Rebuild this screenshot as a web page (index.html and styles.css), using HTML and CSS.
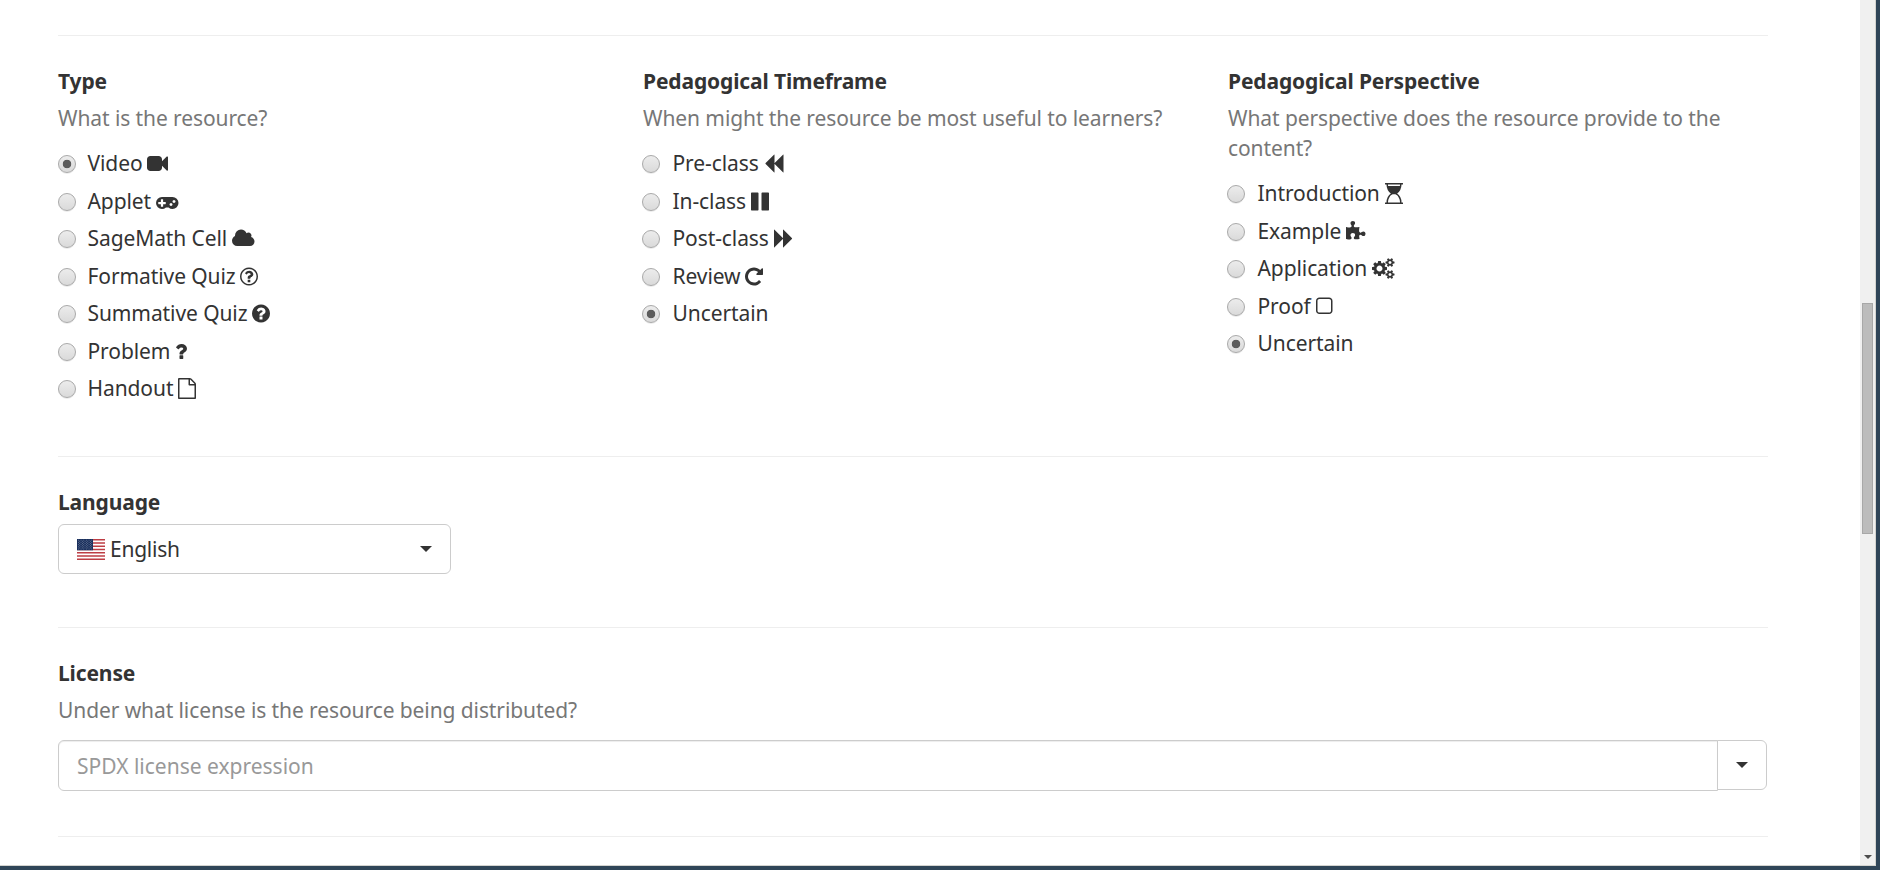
FILE: index.html
```html
<!DOCTYPE html>
<html lang="en">
<head>
<meta charset="utf-8">
<title>Resource</title>
<link rel="stylesheet" href="styles.css">
</head>
<body>
<div class="window">
<main class="page">
  <section class="section columns">
    <div class="col">
      <h2 class="label">Type</h2>
      <p class="help">What is the resource?</p>
      <label class="option"><span class="radio checked"></span>Video <svg class="icon w1792" viewBox="0 -1536 1792 1792"><path transform="scale(1,-1)" d="M1792 1184v-1088q0 -42 -39 -59q-13 -5 -25 -5q-27 0 -45 19l-403 403v-166q0 -119 -84.5 -203.5t-203.5 -84.5h-704q-119 0 -203.5 84.5t-84.5 203.5v704q0 119 84.5 203.5t203.5 84.5h704q119 0 203.5 -84.5t84.5 -203.5v-165l403 402q18 19 45 19q12 0 25 -5q39 -17 39 -59z"/></svg></label>
      <label class="option"><span class="radio"></span>Applet <svg class="icon w1920" viewBox="0 -1536 1920 1792"><path transform="scale(1,-1)" d="M832 448v128q0 14 -9 23t-23 9h-192v192q0 14 -9 23t-23 9h-128q-14 0 -23 -9t-9 -23v-192h-192q-14 0 -23 -9t-9 -23v-128q0 -14 9 -23t23 -9h192v-192q0 -14 9 -23t23 -9h128q14 0 23 9t9 23v192h192q14 0 23 9t9 23zM1408 384q0 53 -37.5 90.5t-90.5 37.5t-90.5 -37.5t-37.5 -90.5t37.5 -90.5t90.5 -37.5t90.5 37.5t37.5 90.5zM1664 640q0 53 -37.5 90.5t-90.5 37.5t-90.5 -37.5t-37.5 -90.5t37.5 -90.5t90.5 -37.5t90.5 37.5t37.5 90.5zM1920 512q0 -212 -150 -362t-362 -150q-192 0 -338 128h-220q-146 -128 -338 -128q-212 0 -362 150t-150 362t150 362t362 150h896q212 0 362 -150t150 -362z"/></svg></label>
      <label class="option"><span class="radio"></span>SageMath Cell <svg class="icon w1920" viewBox="0 -1536 1920 1792"><path transform="scale(1,-1)" d="M1920 384q0 -159 -112.5 -271.5t-271.5 -112.5h-1088q-185 0 -316.5 131.5t-131.5 316.5q0 132 71 241.5t187 163.5q-2 28 -2 43q0 212 150 362t362 150q158 0 286.5 -88t187.5 -230q70 62 166 62q106 0 181 -75t75 -181q0 -75 -41 -138q129 -30 213 -134.5t84 -239.5z"/></svg></label>
      <label class="option"><span class="radio"></span>Formative Quiz <svg class="icon w1536" viewBox="0 -1536 1536 1792"><path transform="scale(1,-1)" d="M880 336v-160q0 -14 -9 -23t-23 -9h-160q-14 0 -23 9t-9 23v160q0 14 9 23t23 9h160q14 0 23 -9t9 -23zM1136 832q0 -50 -15 -90t-45.5 -69t-52 -44t-59.5 -36q-32 -18 -46.5 -28t-26 -24t-11.5 -29v-32q0 -14 -9 -23t-23 -9h-160q-14 0 -23 9t-9 23v68q0 35 10.5 64.5t24 47.5t39 35.5t41 25.5t44.5 21q53 25 75 43t22 49q0 42 -43.5 71.5t-95.5 29.5q-56 0 -95 -27q-29 -20 -80 -83q-9 -12 -25 -12q-11 0 -19 6l-108 82q-10 7 -12 20t5 23q122 192 349 192q129 0 238.5 -89.5t109.5 -214.5zM768 1280q-130 0 -248.5 -51t-204 -136.5t-136.5 -204t-51 -248.5t51 -248.5t136.5 -204t204 -136.5t248.5 -51t248.5 51t204 136.5t136.5 204t51 248.5t-51 248.5t-136.5 204t-204 136.5t-248.5 51zM1536 640q0 -209 -103 -385.5t-279.5 -279.5t-385.5 -103t-385.5 103t-279.5 279.5t-103 385.5t103 385.5t279.5 279.5t385.5 103t385.5 -103t279.5 -279.5t103 -385.5z"/></svg></label>
      <label class="option"><span class="radio"></span>Summative Quiz <svg class="icon w1536" viewBox="0 -1536 1536 1792"><path transform="scale(1,-1)" d="M896 160v192q0 14 -9 23t-23 9h-192q-14 0 -23 -9t-9 -23v-192q0 -14 9 -23t23 -9h192q14 0 23 9t9 23zM1152 832q0 88 -55.5 163t-138.5 116t-170 41q-243 0 -371 -213q-15 -24 8 -42l132 -100q7 -6 19 -6q16 0 25 12q53 68 86 92q34 24 86 24q48 0 85.5 -26t37.5 -59q0 -38 -20 -61t-68 -45q-63 -28 -115.5 -86.5t-52.5 -125.5v-36q0 -14 9 -23t23 -9h192q14 0 23 9t9 23q0 19 21.5 49.5t54.5 49.5q32 18 49 28.5t46 35t44.5 48t28 60.5t12.5 81zM1536 640q0 -209 -103 -385.5t-279.5 -279.5t-385.5 -103t-385.5 103t-279.5 279.5t-103 385.5t103 385.5t279.5 279.5t385.5 103t385.5 -103t279.5 -279.5t103 -385.5z"/></svg></label>
      <label class="option"><span class="radio"></span>Problem <svg class="icon w1024" viewBox="0 -1536 1024 1792"><path transform="scale(1,-1)" d="M704 280v-240q0 -16 -12 -28t-28 -12h-240q-16 0 -28 12t-12 28v240q0 16 12 28t28 12h240q16 0 28 -12t12 -28zM1020 880q0 -54 -15.5 -101t-35 -76.5t-55 -59.5t-57.5 -43.5t-61 -35.5q-41 -23 -68.5 -65t-27.5 -67q0 -17 -12 -32.5t-28 -15.5h-240q-15 0 -25.5 18.5t-10.5 37.5v45q0 83 65 156.5t143 108.5q59 27 84 56t25 76q0 42 -46.5 74t-107.5 32q-65 0 -108 -29q-35 -25 -107 -115q-13 -16 -31 -16q-12 0 -25 8l-164 125q-13 10 -15.5 25t5.5 28q160 266 464 266q80 0 161 -31t146 -83t106 -127.5t41 -158.5z"/></svg></label>
      <label class="option"><span class="radio"></span>Handout <svg class="icon w1536" viewBox="0 -1536 1536 1792"><path transform="scale(1,-1)" d="M1468 1156q28 -28 48 -76t20 -88v-1152q0 -40 -28 -68t-68 -28h-1344q-40 0 -68 28t-28 68v1600q0 40 28 68t68 28h896q40 0 88 -20t76 -48zM1024 1400v-376h376q-10 29 -22 41l-313 313q-12 12 -41 22zM1408 -128v1024h-416q-40 0 -68 28t-28 68v416h-768v-1536h1280z"/></svg></label>
    </div>
    <div class="col shifted">
      <h2 class="label">Pedagogical Timeframe</h2>
      <p class="help">When might the resource be most useful to learners?</p>
      <label class="option"><span class="radio"></span>Pre-class <svg class="icon w1664" viewBox="0 -1536 1664 1792"><path transform="scale(1,-1)" d="M1619 1395q19 19 32 13t13 -32v-1472q0 -26 -13 -32t-32 13l-710 710q-9 9 -13 19v-710q0 -26 -13 -32t-32 13l-710 710q-19 19 -19 45t19 45l710 710q19 19 32 13t13 -32v-710q4 10 13 19z"/></svg></label>
      <label class="option"><span class="radio"></span>In-class <svg class="icon w1536" viewBox="0 -1536 1536 1792"><path transform="scale(1,-1)" d="M1536 1344v-1408q0 -26 -19 -45t-45 -19h-512q-26 0 -45 19t-19 45v1408q0 26 19 45t45 19h512q26 0 45 -19t19 -45zM640 1344v-1408q0 -26 -19 -45t-45 -19h-512q-26 0 -45 19t-19 45v1408q0 26 19 45t45 19h512q26 0 45 -19t19 -45z"/></svg></label>
      <label class="option"><span class="radio"></span>Post-class <svg class="icon w1664" viewBox="0 -1536 1664 1792"><path transform="scale(1,-1)" d="M45 -115q-19 -19 -32 -13t-13 32v1472q0 26 13 32t32 -13l710 -710q9 -9 13 -19v710q0 26 13 32t32 -13l710 -710q19 -19 19 -45t-19 -45l-710 -710q-19 -19 -32 -13t-13 32v710q-4 -10 -13 -19z"/></svg></label>
      <label class="option"><span class="radio"></span>Review <svg class="icon w1536" viewBox="0 -1536 1536 1792"><path transform="scale(1,-1)" d="M1536 1280v-448q0 -26 -19 -45t-45 -19h-448q-42 0 -59 40q-17 39 14 69l138 138q-148 137 -349 137q-104 0 -198.5 -40.5t-163.5 -109.5t-109.5 -163.5t-40.5 -198.5t40.5 -198.5t109.5 -163.5t163.5 -109.5t198.5 -40.5q119 0 225 52t179 147q7 10 23 12q15 0 25 -9l137 -138q9 -8 9.5 -20.5t-7.5 -22.5q-109 -132 -264 -204.5t-327 -72.5q-156 0 -298 61t-245 164t-164 245t-61 298t61 298t164 245t245 164t298 61q147 0 284.5 -55.5t244.5 -156.5l130 129q29 31 70 14q39 -17 39 -59z"/></svg></label>
      <label class="option"><span class="radio checked"></span>Uncertain</label>
    </div>
    <div class="col shifted">
      <h2 class="label">Pedagogical Perspective</h2>
      <p class="help">What perspective does the resource provide to the content?</p>
      <label class="option"><span class="radio"></span>Introduction <svg class="icon w1536" viewBox="0 -1536 1536 1792"><path transform="scale(1,-1)" d="M1408 1408q0 -261 -106.5 -461.5t-266.5 -306.5q160 -106 266.5 -306.5t106.5 -461.5h96q14 0 23 -9t9 -23v-64q0 -14 -9 -23t-23 -9h-1472q-14 0 -23 9t-9 23v64q0 14 9 23t23 9h96q0 261 106.5 461.5t266.5 306.5q-160 106 -266.5 306.5t-106.5 461.5h-96q-14 0 -23 9t-9 23v64q0 14 9 23t23 9h1472q14 0 23 -9t9 -23v-64q0 -14 -9 -23t-23 -9h-96zM1280 1408h-1024q0 -66 9 -128h1006q9 61 9 128zM1280 -128q0 130 -34 249.5t-90.5 208t-126.5 152t-146 94.5h-230q-76 -31 -146 -94.5t-126.5 -152t-90.5 -208t-34 -249.5h1024z"/></svg></label>
      <label class="option"><span class="radio"></span>Example <svg class="icon w1664" viewBox="0 -1536 1664 1792"><path transform="scale(1,-1)" d="M1664 438q0 -81 -44.5 -135t-123.5 -54q-41 0 -77.5 17.5t-59 38t-56.5 38t-71 17.5q-110 0 -110 -124q0 -39 16 -115t15 -115v-5q-22 0 -33 -1q-34 -3 -97.5 -11.5t-115.5 -13.5t-98 -5q-61 0 -103 26.5t-42 83.5q0 37 17.5 71t38 56.5t38 59t17.5 77.5q0 79 -54 123.5t-135 44.5q-84 0 -143 -45.5t-59 -127.5q0 -43 15 -83t33.5 -64.5t33.5 -53t15 -50.5q0 -45 -46 -89q-37 -35 -117 -35q-95 0 -245 24q-9 2 -27.5 4t-27.5 4l-13 2q-1 0 -3 1q-2 0 -2 1v1024q2 -1 17.5 -3.5t34 -5t21.5 -3.5q150 -24 245 -24q80 0 117 35q46 44 46 89q0 22 -15 50.5t-33.5 53t-33.5 64.5t-15 83q0 82 59 127.5t144 45.5q80 0 134 -44.5t54 -123.5q0 -41 -17.5 -77.5t-38 -59t-38 -56.5t-17.5 -71q0 -57 42 -83.5t103 -26.5q64 0 180 15t163 17v-2q-1 -2 -3.5 -17.5t-5 -34t-3.5 -21.5q-24 -150 -24 -245q0 -80 35 -117q44 -46 89 -46q22 0 50.5 15t53 33.5t64.5 33.5t83 15q82 0 127.5 -59t45.5 -143z"/></svg></label>
      <label class="option"><span class="radio"></span>Application <svg class="icon w1920" viewBox="0 -1536 1920 1792"><path transform="scale(1,-1)" d="M896 640q0 106 -75 181t-181 75t-181 -75t-75 -181t75 -181t181 -75t181 75t75 181zM1664 128q0 52 -38 90t-90 38t-90 -38t-38 -90q0 -53 37.5 -90.5t90.5 -37.5t90.5 37.5t37.5 90.5zM1664 1152q0 52 -38 90t-90 38t-90 -38t-38 -90q0 -53 37.5 -90.5t90.5 -37.5t90.5 37.5t37.5 90.5zM1280 731v-185q0 -10 -7 -19.5t-16 -10.5l-155 -24q-11 -35 -32 -76q34 -48 90 -115q7 -11 7 -20q0 -12 -7 -19q-23 -30 -82.5 -89.5t-78.5 -59.5q-11 0 -21 7l-115 90q-37 -19 -77 -31q-11 -108 -23 -155q-7 -24 -30 -24h-186q-11 0 -20 7.5t-10 17.5l-23 153q-34 10 -75 31l-118 -89q-7 -7 -20 -7q-11 0 -21 8q-144 133 -144 160q0 9 7 19q10 14 41 53t47 61q-23 44 -35 82l-152 24q-10 1 -17 9.5t-7 19.5v185q0 10 7 19.5t16 10.5l155 24q11 35 32 76q-34 48 -90 115q-7 11 -7 20q0 12 7 20q22 30 82 89t79 59q11 0 21 -7l115 -90q34 18 77 32q11 108 23 154q7 24 30 24h186q11 0 20 -7.5t10 -17.5l23 -153q34 -10 75 -31l118 89q8 7 20 7q11 0 21 -8q144 -133 144 -160q0 -8 -7 -19q-12 -16 -42 -54t-45 -60q23 -48 34 -82l152 -23q10 -2 17 -10.5t7 -19.5zM1920 198v-140q0 -16 -149 -31q-12 -27 -30 -52q51 -113 51 -138q0 -4 -4 -7q-122 -71 -124 -71q-8 0 -46 47t-52 68q-20 -2 -30 -2t-30 2q-14 -21 -52 -68t-46 -47q-2 0 -124 71q-4 3 -4 7q0 25 51 138q-18 25 -30 52q-149 15 -149 31v140q0 16 149 31q13 29 30 52q-51 113 -51 138q0 4 4 7q4 2 35 20t59 34t30 16q8 0 46 -46.5t52 -67.5q20 2 30 2t30 -2q51 71 92 112l6 2q4 0 124 -70q4 -3 4 -7q0 -25 -51 -138q17 -23 30 -52q149 -15 149 -31zM1920 1222v-140q0 -16 -149 -31q-12 -27 -30 -52q51 -113 51 -138q0 -4 -4 -7q-122 -71 -124 -71q-8 0 -46 47t-52 68q-20 -2 -30 -2t-30 2q-14 -21 -52 -68t-46 -47q-2 0 -124 71q-4 3 -4 7q0 25 51 138q-18 25 -30 52q-149 15 -149 31v140q0 16 149 31q13 29 30 52q-51 113 -51 138q0 4 4 7q4 2 35 20t59 34t30 16q8 0 46 -46.5t52 -67.5q20 2 30 2t30 -2q51 71 92 112l6 2q4 0 124 -70q4 -3 4 -7q0 -25 -51 -138q17 -23 30 -52q149 -15 149 -31z"/></svg></label>
      <label class="option"><span class="radio"></span>Proof <svg class="icon w1408" viewBox="0 -1536 1408 1792"><path transform="scale(1,-1)" d="M1120 1280h-832q-66 0 -113 -47t-47 -113v-832q0 -66 47 -113t113 -47h832q66 0 113 47t47 113v832q0 66 -47 113t-113 47zM1408 1120v-832q0 -119 -84.5 -203.5t-203.5 -84.5h-832q-119 0 -203.5 84.5t-84.5 203.5v832q0 119 84.5 203.5t203.5 84.5h832q119 0 203.5 -84.5t84.5 -203.5z"/></svg></label>
      <label class="option"><span class="radio checked"></span>Uncertain</label>
    </div>
  </section>
  <section class="section language">
    <h2 class="label">Language</h2>
    <div class="select">
      <svg class="flag" viewBox="0 0 28 21"><path fill="#fff" d="M0 0h28v21H0z"/><g fill="#bd3d44"><path d="M0 0h28v1.615H0zM0 3.23h28v1.615H0zM0 6.46h28v1.615H0zM0 9.69h28v1.615H0zM0 12.92h28v1.615H0zM0 16.15h28v1.615H0zM0 19.385h28V21H0z"/></g><path fill="#192f5d" d="M0 0h16v11.3H0z"/><path stroke="#fff" stroke-width=".8" stroke-dasharray=".8 1.87" opacity=".45" d="M1 1.2h15M1 3.4h15M1 5.6h15M1 7.8h15M1 10h15M2.33 2.3H15M2.33 4.5H15M2.33 6.7H15M2.33 8.9H15"/></svg>
      <span class="value">English</span>
      <span class="caret"></span>
    </div>
  </section>
  <section class="section license">
    <h2 class="label">License</h2>
    <p class="help">Under what license is the resource being distributed?</p>
    <div class="group">
      <input class="field" type="text" placeholder="SPDX license expression">
      <div class="addon"><span class="caret"></span></div>
    </div>
  </section>
  <section class="section"></section>
</main>
<aside class="scrollbar"><div class="thumb"></div><span class="down"></span></aside>
</div>
</body>
</html>
```
FILE: styles.css
```css
* { box-sizing: border-box; }
body {
  margin: 0;
  background: #2f4558;
  color: #333;
  font: 21px/30px "Noto Sans", "Open Sans", sans-serif;
  letter-spacing: -0.09px;
  overflow: hidden;
}
.window {
  display: flex;
  width: 1876px;
  height: 866px;
  background: #fff;
  border-right: 1px solid #d4d4d0;
  border-bottom: 1px solid #d4d4d0;
  overflow: hidden;
}
.page { flex: 1; padding: 35px 92px 0 58px; }
.section { border-top: 1px solid #eee; padding-top: 30px; }
.columns { display: grid; grid-template-columns: 540px 540px 540px; column-gap: 45px; height: 421px; }
.language { height: 171px; }
.license { height: 209px; }
.label { margin: 0 0 7px; font-size: 21px; line-height: 30px; font-weight: 700; letter-spacing: -0.13px; }
.help { margin: 0 0 15px; color: #777; }
.option { display: block; height: 30px; margin-bottom: 7.5px; white-space: pre; }
.radio {
  display: inline-block;
  width: 18px;
  height: 18px;
  margin-right: 11.5px;
  vertical-align: -2px;
  border: 1px solid #a9a9a9;
  border-radius: 50%;
  background: linear-gradient(#ececec, #dadada);
  box-shadow: 0 1px 0 rgba(0, 0, 0, .08);
}
.shifted .radio { margin-left: -1px; margin-right: 12.5px; }
.checked { background: radial-gradient(circle, #5c5c5c 0 4px, transparent 4.6px), linear-gradient(#ececec, #dadada); }
.icon { height: 21px; margin-left: -0.5px; vertical-align: -3px; fill: #333; overflow: visible; }
.w1024 { width: 12px; }
.w1408 { width: 16.5px; }
.w1536 { width: 18px; }
.w1664 { width: 19.5px; }
.w1792 { width: 21px; }
.w1920 { width: 22.5px; }
.select {
  display: flex;
  align-items: center;
  width: 393px;
  height: 50px;
  padding: 0 18px;
  border: 1px solid #ccc;
  border-radius: 6px;
}
.flag { width: 28px; height: 21px; margin-right: 5px; }
.value { flex: 1; letter-spacing: -0.25px; }
.caret { border: 6px solid transparent; border-top-color: #333; border-bottom: 0; }
.group { display: flex; align-items: flex-start; width: 1709px; }
.field {
  flex: 1;
  height: 51px;
  padding: 0 18px;
  border: 1px solid #ccc;
  border-radius: 6px 0 0 6px;
  box-shadow: inset 0 1px 1px rgba(0, 0, 0, .075);
  font: inherit;
  color: #555;
}
.field::placeholder { color: #999; opacity: 1; }
.addon {
  display: flex;
  align-items: center;
  justify-content: center;
  width: 50px;
  height: 50px;
  margin-left: -1px;
  border: 1px solid #ccc;
  border-radius: 0 6px 6px 0;
  background: #fff;
}
.scrollbar {
  display: flex;
  flex-direction: column;
  align-items: center;
  justify-content: space-between;
  width: 15px;
  padding: 303px 0 6px;
  background: #f0f0f0;
}
.thumb { width: 11px; height: 231px; border: 1px solid #a8a8a8; background: #bcbcbc; }
.down { border: 4px solid transparent; border-top-color: #4c4c4c; border-bottom: 0; }
```
